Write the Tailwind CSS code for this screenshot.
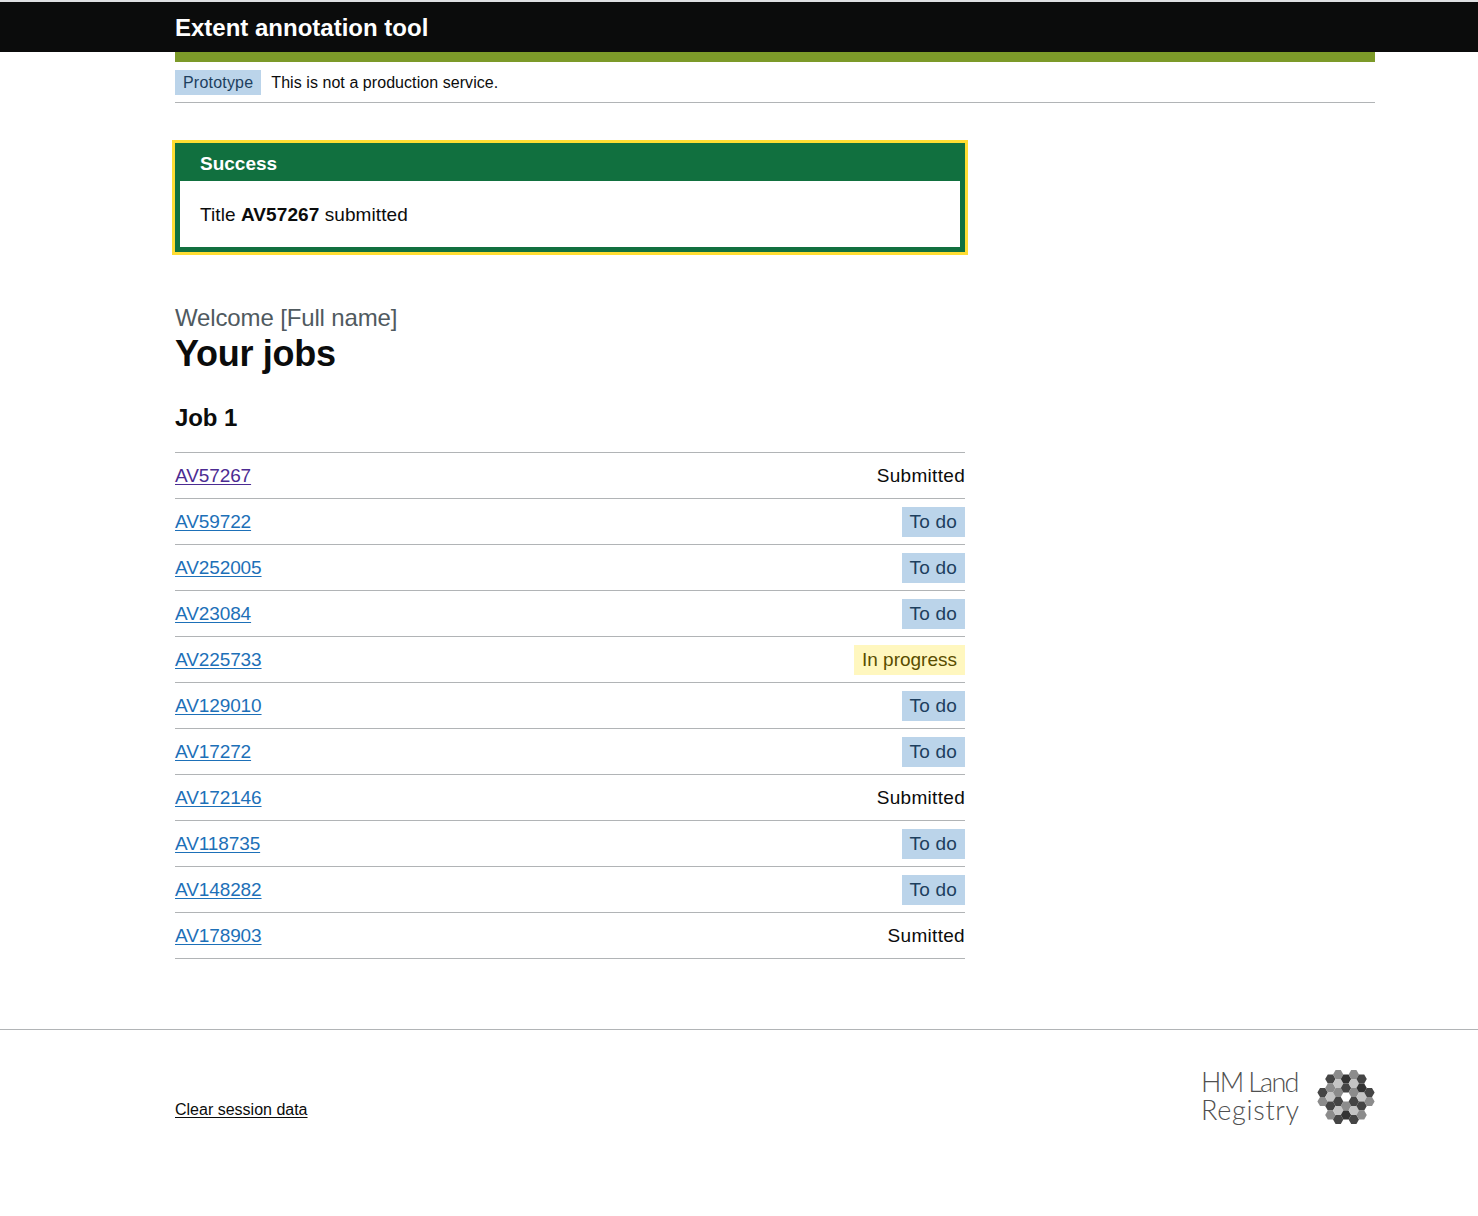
<!DOCTYPE html>
<html lang="en">
<head>
  <meta charset="UTF-8" />
  <title>Your jobs - Extent annotation tool</title>
  <script src="https://cdn.jsdelivr.net/npm/@tailwindcss/browser@4"></script>
</head>
<body class="bg-white text-[#0b0c0c] font-['Liberation_Sans',Arial,sans-serif]">

  <!-- Header -->
  <header class="h-[52px] bg-[#0b0c0c] border-t-2 border-[#dee0e2] px-[175px]">
    <a href="#" class="block pt-[11px] text-[24px] leading-[30px] font-bold text-white">Extent annotation tool</a>
  </header>

  <div class="ml-[175px] mr-[103px]">
    <div class="h-[10px] bg-[#7c9a29]"></div>
    <div class="h-[41px] flex items-start pt-2 border-b border-[#b1b4b6]">
      <span class="h-[25px] px-2 bg-[#bbd4ea] text-[#1d3f5e] text-[16px] leading-[25px] tracking-[0.2px]">Prototype</span>
      <span class="ml-[10px] text-[16px] leading-[25px] tracking-[0.06px]">This is not a production service.</span>
    </div>

    <main class="w-[790px]">
      <!-- Success banner -->
      <div class="mt-[40px] border-[5px] border-[#11703f] outline-3 outline-[#ffdd33]">
        <div class="h-[33px] bg-[#11703f] pl-[20px] text-[19px] leading-[32px] font-bold text-white">Success</div>
        <div class="h-[66px] pt-[21px] pl-[20px] text-[19px] leading-[25px] tracking-[0.08px]">Title <strong>AV57267</strong> submitted</div>
      </div>

      <p class="mt-[51px] text-[24px] leading-[30px] tracking-[-0.14px] text-[#505a5f]">Welcome [Full name]</p>
      <h1 class="mt-[1px] text-[36px] leading-[40px] font-bold tracking-[-0.3px]">Your jobs</h1>
      <h2 class="mt-[29px] text-[24px] leading-[30px] font-bold tracking-[-0.1px]">Job 1</h2>

      <ul class="mt-[19px] border-t border-[#b1b4b6] text-[19px]">
        <li class="h-[46px] flex items-center justify-between border-b border-[#b1b4b6]">
          <a href="#" class="mt-[2px] text-[#4c2c92] underline underline-offset-2 decoration-1 tracking-[-0.1px]">AV57267</a>
          <span class="mt-[2px] tracking-[0.3px]">Submitted</span>
        </li>
        <li class="h-[46px] flex items-center justify-between border-b border-[#b1b4b6]">
          <a href="#" class="mt-[2px] text-[#1d70b8] underline underline-offset-2 decoration-1 tracking-[-0.1px]">AV59722</a>
          <span class="h-[30px] px-2 bg-[#bbd4ea] text-[#1d3f5e] leading-[30px] tracking-[0.2px]">To do</span>
        </li>
        <li class="h-[46px] flex items-center justify-between border-b border-[#b1b4b6]">
          <a href="#" class="mt-[2px] text-[#1d70b8] underline underline-offset-2 decoration-1 tracking-[-0.1px]">AV252005</a>
          <span class="h-[30px] px-2 bg-[#bbd4ea] text-[#1d3f5e] leading-[30px] tracking-[0.2px]">To do</span>
        </li>
        <li class="h-[46px] flex items-center justify-between border-b border-[#b1b4b6]">
          <a href="#" class="mt-[2px] text-[#1d70b8] underline underline-offset-2 decoration-1 tracking-[-0.1px]">AV23084</a>
          <span class="h-[30px] px-2 bg-[#bbd4ea] text-[#1d3f5e] leading-[30px] tracking-[0.2px]">To do</span>
        </li>
        <li class="h-[46px] flex items-center justify-between border-b border-[#b1b4b6]">
          <a href="#" class="mt-[2px] text-[#1d70b8] underline underline-offset-2 decoration-1 tracking-[-0.1px]">AV225733</a>
          <span class="h-[30px] px-2 bg-[#fff7bf] text-[#594d00] leading-[30px]">In progress</span>
        </li>
        <li class="h-[46px] flex items-center justify-between border-b border-[#b1b4b6]">
          <a href="#" class="mt-[2px] text-[#1d70b8] underline underline-offset-2 decoration-1 tracking-[-0.1px]">AV129010</a>
          <span class="h-[30px] px-2 bg-[#bbd4ea] text-[#1d3f5e] leading-[30px] tracking-[0.2px]">To do</span>
        </li>
        <li class="h-[46px] flex items-center justify-between border-b border-[#b1b4b6]">
          <a href="#" class="mt-[2px] text-[#1d70b8] underline underline-offset-2 decoration-1 tracking-[-0.1px]">AV17272</a>
          <span class="h-[30px] px-2 bg-[#bbd4ea] text-[#1d3f5e] leading-[30px] tracking-[0.2px]">To do</span>
        </li>
        <li class="h-[46px] flex items-center justify-between border-b border-[#b1b4b6]">
          <a href="#" class="mt-[2px] text-[#1d70b8] underline underline-offset-2 decoration-1 tracking-[-0.1px]">AV172146</a>
          <span class="mt-[2px] tracking-[0.3px]">Submitted</span>
        </li>
        <li class="h-[46px] flex items-center justify-between border-b border-[#b1b4b6]">
          <a href="#" class="mt-[2px] text-[#1d70b8] underline underline-offset-2 decoration-1 tracking-[-0.1px]">AV118735</a>
          <span class="h-[30px] px-2 bg-[#bbd4ea] text-[#1d3f5e] leading-[30px] tracking-[0.2px]">To do</span>
        </li>
        <li class="h-[46px] flex items-center justify-between border-b border-[#b1b4b6]">
          <a href="#" class="mt-[2px] text-[#1d70b8] underline underline-offset-2 decoration-1 tracking-[-0.1px]">AV148282</a>
          <span class="h-[30px] px-2 bg-[#bbd4ea] text-[#1d3f5e] leading-[30px] tracking-[0.2px]">To do</span>
        </li>
        <li class="h-[46px] flex items-center justify-between border-b border-[#b1b4b6]">
          <a href="#" class="mt-[2px] text-[#1d70b8] underline underline-offset-2 decoration-1 tracking-[-0.1px]">AV178903</a>
          <span class="mt-[2px] tracking-[0.3px]">Sumitted</span>
        </li>
      </ul>
    </main>
  </div>

  <!-- Footer -->
  <footer class="mt-[70px] border-t border-[#b1b4b6] h-[187px] pl-[175px] pr-[103px]">
    <div class="pt-[39px] flex items-end justify-between">
      <a href="#" class="mb-[5px] text-[16px] leading-[20px] underline underline-offset-2 decoration-1">Clear session data</a>
      <div class="h-[56px] flex items-start gap-[19px]">
        <div class="w-[97px] -mt-[1px] text-[27px] text-[#505050] font-['Lato',sans-serif] font-light">
          <div class="h-[28px] leading-[28px] whitespace-nowrap tracking-[-1.7px]">HM Land</div>
          <div class="h-[28px] leading-[28px] whitespace-nowrap tracking-[0.7px]">Registry</div>
        </div>
        <!-- logo: honeycomb of flat-top hexagons, centre one left white -->
        <svg width="58" height="56" viewBox="-29 -28 58 56" aria-hidden="true">
          <defs>
            <polygon id="hex" points="-5.2,0 -2.6,-4.5 2.6,-4.5 5.2,0 2.6,4.5 -2.6,4.5" />
          </defs>
          <use href="#hex" x="-23.4" y="-4.5" fill="#454545" />
          <use href="#hex" x="-23.4" y="4.5" fill="#8c8c8c" />

          <use href="#hex" x="-15.6" y="-18" fill="#454545" />
          <use href="#hex" x="-15.6" y="-9" fill="#8c8c8c" />
          <use href="#hex" x="-15.6" y="0" fill="#c4c4c4" />
          <use href="#hex" x="-15.6" y="9" fill="#454545" />
          <use href="#hex" x="-15.6" y="18" fill="#8c8c8c" />

          <use href="#hex" x="-7.8" y="-22.5" fill="#8c8c8c" />
          <use href="#hex" x="-7.8" y="-13.5" fill="#c4c4c4" />
          <use href="#hex" x="-7.8" y="-4.5" fill="#8c8c8c" />
          <use href="#hex" x="-7.8" y="4.5" fill="#454545" />
          <use href="#hex" x="-7.8" y="13.5" fill="#c4c4c4" />
          <use href="#hex" x="-7.8" y="22.5" fill="#454545" />

          <use href="#hex" x="0" y="-18" fill="#333333" />
          <use href="#hex" x="0" y="-9" fill="#454545" />
          <use href="#hex" x="0" y="9" fill="#8c8c8c" />
          <use href="#hex" x="0" y="18" fill="#333333" />

          <use href="#hex" x="7.8" y="-22.5" fill="#8c8c8c" />
          <use href="#hex" x="7.8" y="-13.5" fill="#c4c4c4" />
          <use href="#hex" x="7.8" y="-4.5" fill="#8c8c8c" />
          <use href="#hex" x="7.8" y="4.5" fill="#454545" />
          <use href="#hex" x="7.8" y="13.5" fill="#c4c4c4" />
          <use href="#hex" x="7.8" y="22.5" fill="#454545" />

          <use href="#hex" x="15.6" y="-18" fill="#454545" />
          <use href="#hex" x="15.6" y="-9" fill="#333333" />
          <use href="#hex" x="15.6" y="0" fill="#c4c4c4" />
          <use href="#hex" x="15.6" y="9" fill="#454545" />
          <use href="#hex" x="15.6" y="18" fill="#8c8c8c" />

          <use href="#hex" x="23.4" y="-4.5" fill="#454545" />
          <use href="#hex" x="23.4" y="4.5" fill="#8c8c8c" />
        </svg>
      </div>
    </div>
  </footer>
</body>
</html>
